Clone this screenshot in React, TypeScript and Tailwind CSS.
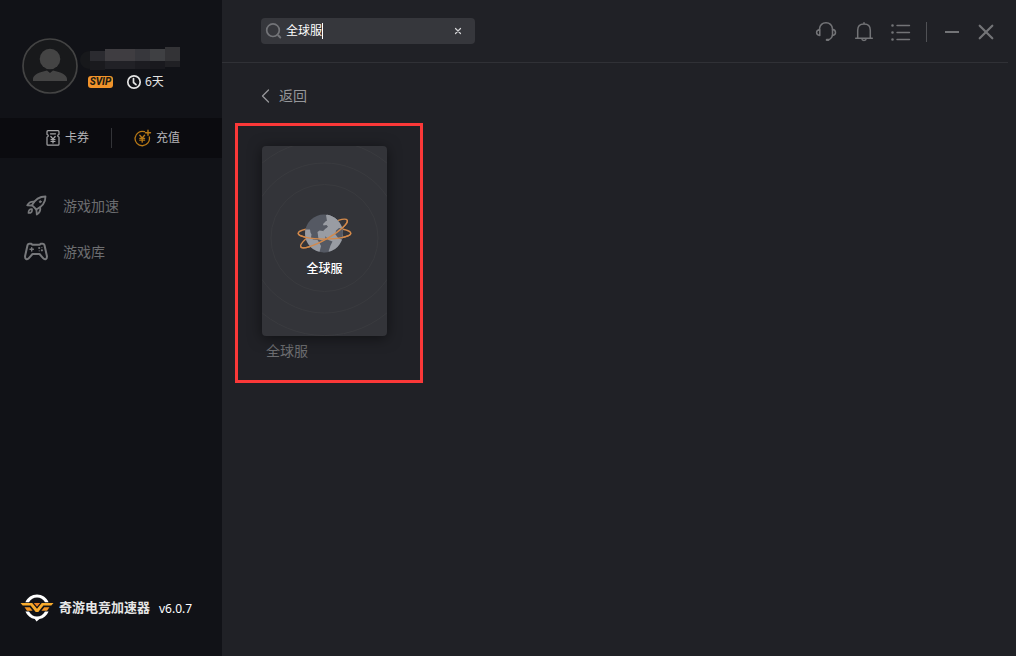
import { useState } from "react";
import type { ReactNode } from "react";

function Icon({ className, viewBox, children }: { className: string; viewBox: string; children: ReactNode }) {
  return (
    <svg
      className={className}
      viewBox={viewBox}
      fill="none"
      stroke="currentColor"
      strokeLinecap="round"
      strokeLinejoin="round"
      aria-hidden="true"
    >
      {children}
    </svg>
  );
}

function Avatar() {
  return (
    <svg className="size-14 shrink-0" viewBox="0 0 56 56" aria-hidden="true">
      <circle cx="28" cy="28" r="27" fill="#18191b" stroke="#434343" strokeWidth="1.7" />
      <circle cx="28" cy="21" r="10.3" fill="#444444" />
      <path d="M11 43v-2c0-4 6-7 14-8.500l3 2.500 3-2.500c8 1.500 14 4.500 14 8.500v2z" fill="#444444" />
    </svg>
  );
}

function MaskedName() {
  return (
    <svg className="h-6 w-25" viewBox="0 0 100 24" aria-hidden="true">
      <path d="M10 5C4 5 0 9 0 14s4 9 10 9z" fill="#17181b" />
      <g shapeRendering="crispEdges">
        <path d="M10 5h15v10H10z" fill="#2b2b30" />
        <path d="M25 3h30v12H25z" fill="#3f3d41" />
        <path d="M55 3h15v12H55z" fill="#37373c" />
        <path d="M70 3h15v12H70z" fill="#3f4043" />
        <path d="M85 1h15v14H85z" fill="#333336" />
        <path d="M10 15h15v9H10z" fill="#1a1a1e" />
        <path d="M25 15h30v8H25z" fill="#212126" />
        <path d="M55 15h15v8H55z" fill="#1c1c21" />
        <path d="M70 15h15v8H70z" fill="#19191e" />
        <path d="M85 15h15v6H85z" fill="#202024" />
      </g>
    </svg>
  );
}

function ClockIcon() {
  return (
    <Icon className="size-4 text-[#e4e4e4]" viewBox="0 0 16 16">
      <circle cx="8" cy="8" r="6.200" strokeWidth="1.7" />
      <path d="M7.500 4.500v4l2.500 2.200" strokeWidth="1.700" />
    </Icon>
  );
}

function CouponIcon() {
  return (
    <Icon className="h-4 w-3.5 text-[#a5a5a7]" viewBox="0 0 14 16">
      <path d="M2 .7h10c.6 0 1 .4 1 1v2.600c-1.700.3-1.700 2.400 0 2.700v7.200c0 .6-.4 1-1 1H2c-.6 0-1-.4-1-1V7c1.700-.3 1.700-2.400 0-2.700V1.700c0-.6.4-1 1-1z" strokeWidth="1.200" />
      <path d="M4.500 3.800h5M4.800 6.500 7 9l2.200-2.500M7 9v4M5 9.500h4M5 11.300h4" strokeWidth="1.200" />
    </Icon>
  );
}

function RechargeIcon() {
  return (
    <Icon className="size-4.5 text-[#b87916]" viewBox="0 0 18 18">
      <path d="M10.500 2.700A7.200 7.200 0 1 0 15.300 8" strokeWidth="1.300" />
      <path d="M14 1.200v5M11.500 3.700h5" strokeWidth="1.400" />
      <path d="M5.800 6.300 8.200 9l2.400-2.700M8.200 9v4.200M5.800 9.300h4.800M5.800 11.200h4.800" strokeWidth="1.300" />
    </Icon>
  );
}

function RocketIcon() {
  return (
    <Icon className="size-6 text-[#77787b]" viewBox="0 0 24 24">
      <path d="M21.500 2.500C15.500 2.500 11.500 4.500 8 11.200l4.300 4.300C18.500 12.500 21.500 8.500 21.500 2.500z" strokeWidth="1.800" />
      <path d="M10.300 7.600C7 7.300 4.800 8.200 3.200 11.300l4.800.2M16.200 13.300c.5 3.200-.5 5.400-3.400 7.200l-.4-4.800" strokeWidth="1.800" />
      <circle cx="16.300" cy="7.700" r="1" fill="currentColor" strokeWidth=".8" />
      <path d="M8 15.200c-2.500-.2-3.500 1.100-3.500 3.800 2.800 0 4-1.200 3.500-3.800z" strokeWidth="1.700" />
    </Icon>
  );
}

function GamepadIcon() {
  return (
    <Icon className="size-6 text-[#77787b]" viewBox="0 0 24 24">
      <path d="M3.500 5.200c.3-.8 1-1.400 1.800-1.400h2l1 .9h7.400l1-.9h2c.8 0 1.500.6 1.800 1.400L22.900 16c.4 3.100-2 4.300-3.800 2.200L15.500 14h-7l-3.600 4.200C3.100 20.300.7 19.100 1.100 16z" strokeWidth="2" />
      <path d="M6 9.300h3.400M7.700 7.600V11" strokeWidth="1.400" />
      <g fill="currentColor" stroke="none">
        <circle cx="15.200" cy="8" r="1.100" />
        <circle cx="17.900" cy="10.300" r="1.100" />
        <circle cx="17.900" cy="7.600" r=".6" />
        <circle cx="15.200" cy="10.800" r=".6" />
      </g>
    </Icon>
  );
}

function BrandLogo() {
  return (
    <svg className="h-7 w-8.5" viewBox="0 0 34 28" aria-hidden="true">
      <path d="M5.400 8.200C7.500 3.500 11.900.5 17 .5s9.500 3 11.600 7.700H25C23.300 5.200 20.400 3.400 17 3.400S10.700 5.200 9 8.200z" fill="#fff" />
      <path d="M5.400 17.500c1.700 4 5.300 6.800 9.400 7.600L16.500 27.500l3-2.400c4.100-.8 7.500-3.600 9.100-7.600H25c-1.600 3-4.600 5-8 5s-6.400-2-8-5z" fill="#fff" />
      <g fill="#f9ab2c">
        <path d="M.5 9h11.700L17 14.800 21.800 9h11.700l-2.200 2.600h-7.900L18.300 18h-2.600l-5.100-6.400H2.700z" />
        <path d="M13.800 9h6.400L17 12.700z" fill="#ef8222" />
        <path d="M4.500 13.200h5.300l2.800 3.600H7z" fill="#f29424" />
        <path d="M29.500 13.200h-5.300l-2.800 3.600H27z" fill="#f29424" />
      </g>
    </svg>
  );
}

function Globe() {
  return (
    <svg className="h-10 w-14" viewBox="1 0 56 40" aria-hidden="true">
      <defs>
        <clipPath id="globe-disc">
          <circle cx="28" cy="20.500" r="19" />
        </clipPath>
      </defs>
      <g fill="none" stroke="#d3894a" strokeWidth="1.400">
        <ellipse cx="28.500" cy="20.300" rx="26.300" ry="5.800" />
        <ellipse cx="28" cy="20.500" rx="26.800" ry="6" transform="rotate(-30 28 20.500)" />
      </g>
      <circle cx="28" cy="20.500" r="19" fill="#555963" />
      <g clipPath="url(#globe-disc)" fill="#999ca3">
        <path d="M30.500 0l.5 3 2.500 2-1.500 2.500-2 .5-3 3 .5 1.500 3-.5 1.500 1.500-1.500 2.500-3 1.500-.5 3 2 2.500 3 1 .5 3 4 1.500-2 4-2 6 5 4 15-8V16l-6 1-1-2-4 0-1-15z" />
        <path d="M30 2l9 0 7 8 2 5-7 8-8 4-5-5-1-3 2-3 3-2z" />
        <path d="M8 16.500h6l.5 3 1 2-.5 3 2 2 4.500.500 2 3 1.500 3-1 4-1 4H16L6 30z" />
        <path d="M21.500 19l2-1.500 3.500.5 2 3 .5 5-4 1.500-3-1.500z" />
      </g>
      <path d="M40 17.500l3-2.500 3.500.5.500 5-1 6-3.500-1-3-4z" fill="#555963" />
      <path d="M25.500 29.500l4.500-2 4.500 1.500-1.500 4-1.500 2 .5 4.200h-5l1.500-3.700z" fill="#555963" />
      <g fill="none" stroke="#d3894a" strokeWidth="1.400">
        <path d="M2.200 20.300a26.300 5.800 0 0 0 52.600 0" />
        <path d="M1.200 20.500a26.800 6 0 0 0 53.600 0" transform="rotate(-30 28 20.500)" />
      </g>
    </svg>
  );
}

function GameCard() {
  return (
    <a
      href="#global"
      className="relative flex h-47.5 w-31.25 flex-col items-center rounded bg-[#333439] pt-[67px] shadow-[0_2px_14px_rgba(0,0,0,0.5)]"
    >
      <svg className="absolute inset-0 size-full" viewBox="0 0 125 190" fill="none" stroke="#3a3b3f" aria-hidden="true">
        <circle cx="62.500" cy="92" r="53.500" />
        <circle cx="62.500" cy="92" r="75" />
        <circle cx="62.500" cy="92" r="97.500" />
      </svg>
      <span className="relative flex flex-col items-center gap-2">
        <Globe />
        <span className="text-xs font-medium text-white">全球服</span>
      </span>
    </a>
  );
}

function Sidebar() {
  return (
    <aside className="flex w-55.5 shrink-0 flex-col bg-[#111217]">
      <div className="flex h-29.5 gap-0.5 pt-9.5 pl-5.5">
        <Avatar />
        <div className="flex flex-col pt-2">
          <MaskedName />
          <div className="flex items-center pt-1 pl-2">
            <span className="flex h-3 w-[25px] items-center justify-center rounded-[3px] bg-[#f0932b] font-['Roboto',sans-serif] text-[10px] leading-3 font-extrabold italic text-[#201a12]">
              SVIP
            </span>
            <span className="ml-[13px] flex items-center gap-[3px] text-xs text-[#e4e4e4]">
              <ClockIcon />
              6天
            </span>
          </div>
        </div>
      </div>

      <div className="flex h-10 items-center bg-[#0b0b0f] text-xs text-[#b4b4b6]">
        <button type="button" className="flex w-1/2 items-center justify-end gap-[5px] pr-[22px]">
          <CouponIcon />
          卡券
        </button>
        <span className="h-5 w-px bg-[#333438]" />
        <button type="button" className="flex flex-1 items-center gap-1 pl-[22px]">
          <RechargeIcon />
          充值
        </button>
      </div>

      <nav className="flex flex-col gap-5.5 px-6 pt-9 text-sm text-[#6c6d70]">
        <a href="#boost" className="flex h-6 items-center gap-[15px]">
          <RocketIcon />
          游戏加速
        </a>
        <a href="#library" className="flex h-6 items-center gap-[15px]">
          <GamepadIcon />
          游戏库
        </a>
      </nav>

      <div className="mt-auto flex items-center gap-[5px] pb-8.5 pl-5">
        <BrandLogo />
        <span className="text-[13px] font-bold text-[#e6e6e6]">奇游电竞加速器</span>
        <span className="pt-px pl-1 text-xs text-white">v6.0.7</span>
      </div>
    </aside>
  );
}

function Header() {
  const [query, setQuery] = useState("全球服");
  return (
    <header className="mr-2 flex h-[63px] items-center justify-between border-b border-[#303136] pr-2.5 pl-[39px]">
      <div className="relative flex h-6.5 w-53.5 items-center rounded bg-[#36373c] pl-1">
        <Icon className="size-4.5 text-[#737478]" viewBox="0 0 18 18">
          <circle cx="8" cy="8.200" r="6.300" strokeWidth="1.700" />
          <path d="m13.300 13.500 2 2" strokeWidth="1.900" />
        </Icon>
        <input
          type="text"
          aria-label="搜索游戏"
          value={query}
          onChange={(e) => setQuery(e.target.value)}
          className="ml-[3px] w-40 bg-transparent text-xs text-white caret-transparent outline-none"
        />
        <span className="absolute left-[61px] h-4 w-px bg-white" />
        <button type="button" aria-label="清空" onClick={() => setQuery("")} className="absolute right-3 text-[#d4d4d6]">
          <Icon className="size-2.5" viewBox="0 0 10 10">
            <path d="m2.500 2.500 5 5m0-5-5 5" strokeWidth="1.200" />
          </Icon>
        </button>
      </div>

      <div className="flex items-center pt-0.5 text-[#737477]">
        <button type="button" aria-label="客服">
          <Icon className="size-6" viewBox="0 0 24 24">
            <path d="M5.500 9C6 5 8.700 2.800 12 2.800S18 5 18.500 9v5.500c-.3 3-1.700 4.600-4 5.200" strokeWidth="1.500" />
            <path d="M5.800 9.500c-2 .2-3.200 1.300-3.200 3s1.200 2.800 3.200 3zM18.500 9.500c2 .2 3 1.300 3 3s-1 2.800-3 3" strokeWidth="1.500" />
            <path d="M12.800 19.900h1.500" strokeWidth="2.200" />
          </Icon>
        </button>
        <button type="button" aria-label="通知" className="ml-3.5">
          <Icon className="size-6" viewBox="0 0 24 24">
            <path d="M5.700 18V10.200C5.700 6.300 8.300 4 12 4s6.300 2.300 6.300 6.200V18M3.700 18.200h16.600M12 2.800V4M9.700 18.500c.4 2.600 4.200 2.600 4.600 0" strokeWidth="1.500" />
          </Icon>
        </button>
        <button type="button" aria-label="菜单" className="ml-[13px]">
          <Icon className="size-6" viewBox="0 0 24 24">
            <path d="M8 5.500h12.500M8 12.500h12.500M8 19.500h12.500" strokeWidth="1.400" />
            <path d="M3.500 5.500h.01M3.500 12.500h.01M3.500 19.500h.01" strokeWidth="2.600" />
          </Icon>
        </button>
        <span className="mx-[13px] h-5 w-px bg-[#505155]" />
        <button type="button" aria-label="最小化">
          <Icon className="size-6" viewBox="0 0 24 24">
            <path d="M5 12h14" strokeWidth="2" strokeLinecap="butt" />
          </Icon>
        </button>
        <button type="button" aria-label="关闭" className="ml-2.5">
          <Icon className="size-6" viewBox="0 0 24 24">
            <path d="m5.700 5.700 12.600 12.600m0-12.600L5.700 18.300" strokeWidth="2.200" />
          </Icon>
        </button>
      </div>
    </header>
  );
}

export default function App() {
  return (
    <div className="flex min-h-screen bg-[#202126] font-['Noto_Sans','Noto_Sans_CJK_SC',sans-serif]">
      <Sidebar />
      <main className="flex min-w-0 flex-1 flex-col">
        <Header />
        <a href="#back" className="mt-[23px] ml-[39px] flex h-5 items-center gap-2 self-start text-sm text-[#96979a]">
          <Icon className="h-4 w-2.5" viewBox="0 0 10 16">
            <path d="M7.500 2 1.500 8l6 6" strokeWidth="1.300" />
          </Icon>
          返回
        </a>
        <section className="mt-[17px] ml-[13px] flex w-47 flex-col border-3 border-[#fb3838] pt-5 pb-[19px] pl-6">
          <GameCard />
          <span className="pt-[5px] pl-1 text-sm text-[#6c6d70]">全球服</span>
        </section>
      </main>
    </div>
  );
}
